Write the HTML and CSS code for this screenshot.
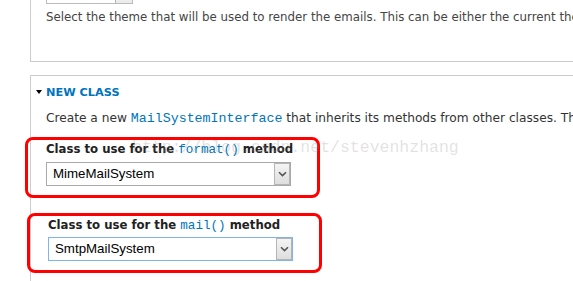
FILE: index.html
```html
<!DOCTYPE html>
<html lang="en">
<head>
  <meta charset="UTF-8" />
  <title>Mail System</title>
  <link rel="stylesheet" href="styles.css">
</head>
<body>
  <div class="page">
    <div class="fieldset theme-set">
      <div class="select stub"><span class="arrow"></span></div>
      <div class="description">Select the theme that will be used to render the emails. This can be either the current theme, the default theme, or a specific one.</div>
    </div>

    <div class="fieldset new-class">
      <div class="legend"><span class="caret"></span>NEW CLASS</div>
      <div class="intro">Create a new <code>MailSystemInterface</code> that inherits its methods from other classes. The new class will be stored as a file.</div>

      <div class="form-item first">
        <label>Class to use for the <code>format()</code> method</label>
        <div class="select">
          <span class="value">MimeMailSystem</span>
          <span class="arrow">
            <svg width="9" height="6" viewBox="0 0 9 6"><path d="M1 1.2 L4.5 4.6 L8 1.2" fill="none" stroke="#555" stroke-width="1.6"/></svg>
          </span>
        </div>
      </div>

      <div class="form-item second">
        <label>Class to use for the <code>mail()</code> method</label>
        <div class="select focus">
          <span class="value">SmtpMailSystem</span>
          <span class="arrow">
            <svg width="9" height="6" viewBox="0 0 9 6"><path d="M1 1.2 L4.5 4.6 L8 1.2" fill="none" stroke="#555" stroke-width="1.6"/></svg>
          </span>
        </div>
      </div>
    </div>

    <div class="watermark">http://blog.csdn.net/stevenhzhang</div>
  </div>
</body>
</html>
```

FILE: styles.css
```css
html, body {
  margin: 0;
  background: #fff;
  color: #333;
  font-family: "DejaVu Sans", Verdana, sans-serif;
  font-size: 12px;
  line-height: 16px;
  overflow: hidden;
}

.page {
  position: relative;
  padding-left: 30px;
  width: 700px;
}

.fieldset {
  border: 1px solid #ccc;
  padding-left: 15px;
}

.theme-set {
  margin-top: -20px;
  border-top: none;
  padding-bottom: 36px;
}

.theme-set .description {
  margin-top: 5px;
  font-size: 11.8px;
  color: #444;
  white-space: nowrap;
}

.new-class {
  margin-top: 13px;
  border-bottom: none;
  padding-top: 9px;
  padding-bottom: 20px;
}

.legend {
  margin-left: -10px;
  font-size: 11.3px;
  font-weight: bold;
  color: #0074bd;
}

.caret {
  display: inline-block;
  width: 0;
  height: 0;
  border-left: 3.5px solid transparent;
  border-right: 3.5px solid transparent;
  border-top: 4px solid #000;
  margin-right: 4px;
  vertical-align: 2px;
}

.intro {
  margin-top: 9px;
  font-size: 12.2px;
  white-space: nowrap;
}

code {
  font-family: "Liberation Mono", "Courier New", monospace;
  font-size: 13.3px;
  color: #0074bd;
}

.form-item {
  width: 271px;
  border: 3px solid #f00;
  border-radius: 8px;
  padding: 1px 0 9px 18px;
}

.form-item.first {
  margin: 10px 0 0 -21px;
}

.form-item.second {
  margin: 15px 0 0 -19px;
}

.form-item label {
  display: block;
  font-weight: bold;
  font-size: 11.7px;
  color: #222;
}

.form-item label code {
  font-size: 12.6px;
  font-weight: normal;
}

.select {
  box-sizing: border-box;
  width: 245px;
  height: 24px;
  border: 1px solid #a9a9a9;
  background: #fff;
  display: flex;
  align-items: center;
  justify-content: space-between;
  margin-top: 4px;
}

.second .select {
  margin-top: 3px;
}

.select.focus {
  border-color: #7eb4ea;
}

.select .value {
  padding-left: 6px;
  font-family: "Liberation Sans", Arial, sans-serif;
  font-size: 13.3px;
  color: #000;
}

.select .arrow {
  box-sizing: border-box;
  width: 16px;
  height: 22px;
  border: 1px solid #b5b5b5;
  background: linear-gradient(#f4f4f4, #dedede);
  display: flex;
  align-items: center;
  justify-content: center;
}

.stub {
  width: 87px;
  margin-top: 0;
  justify-content: flex-end;
  border-color: #bbb;
}

.stub .arrow {
  width: 17px;
  border-width: 0 0 0 1px;
  background: #ececec;
}

.watermark {
  position: absolute;
  left: 132px;
  top: 160px;
  font-family: "Liberation Mono", monospace;
  font-size: 16.5px;
  color: rgba(150, 150, 150, 0.28);
  pointer-events: none;
}
```
